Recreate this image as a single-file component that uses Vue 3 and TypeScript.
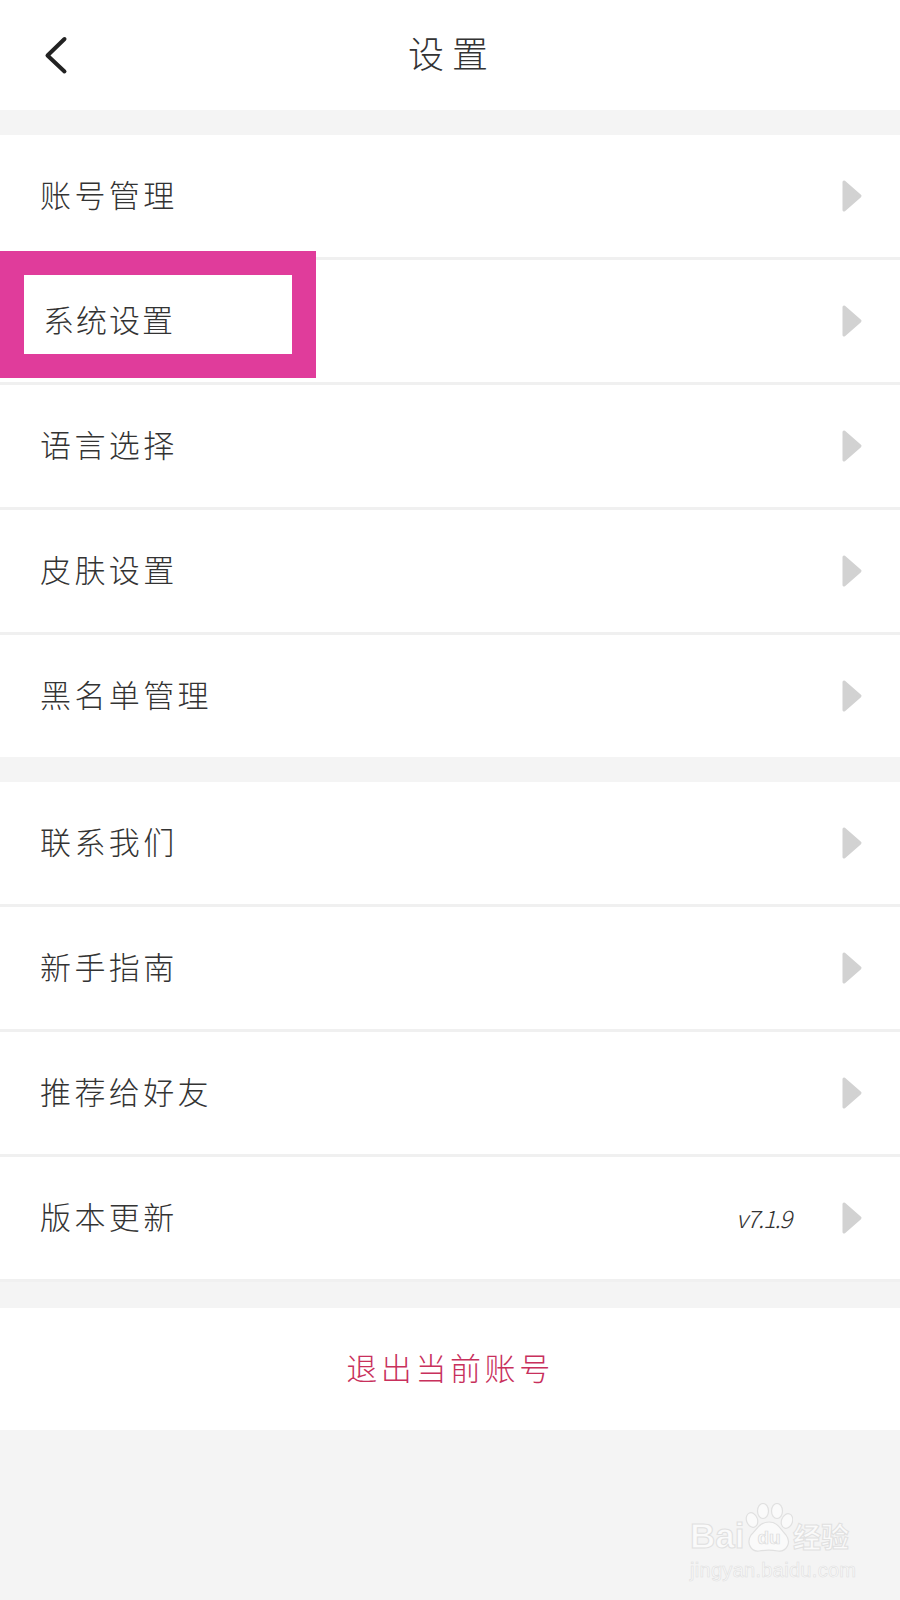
<script setup lang="ts">
interface Row { label: string; value?: string; marked?: boolean }
const groups: Row[][] = [
  [
    { label: '账号管理' },
    { label: '系统设置', marked: true },
    { label: '语言选择' },
    { label: '皮肤设置' },
    { label: '黑名单管理' },
  ],
  [
    { label: '联系我们' },
    { label: '新手指南' },
    { label: '推荐给好友' },
    { label: '版本更新', value: 'v7.1.9' },
  ],
]
</script>

<template>
  <div class="page">
    <header class="header">
      <svg class="back" width="28" height="40" viewBox="0 0 28 40" aria-hidden="true">
        <path d="M22.5 4 L5.5 20.5 L22.5 36.5" fill="none" stroke="#222" stroke-width="4" stroke-linecap="round" stroke-linejoin="round" />
      </svg>
      <h1 class="title">设置</h1>
    </header>

    <section v-for="(group, g) in groups" :key="g" class="group">
      <div v-for="row in group" :key="row.label" class="row" :class="{ marked: row.marked }">
        <span class="label">{{ row.label }}</span>
        <span v-if="row.value" class="value">{{ row.value }}</span>
        <svg class="arrow" width="22" height="34" viewBox="0 0 22 34" aria-hidden="true">
          <path d="M3 3 L19 17 L3 31 Z" fill="#d2d2d2" stroke="#d2d2d2" stroke-width="3" stroke-linejoin="round" />
        </svg>
        <div v-if="row.marked" class="highlight"></div>
      </div>
    </section>

    <div class="logout">退出当前账号</div>

    <div class="watermark">
      <div class="brand">
        <span class="bai">Bai</span>
        <svg class="paw" width="48" height="50" viewBox="0 0 48 50" aria-hidden="true">
          <g fill="#fafafa" stroke="#e0e0e0" stroke-width="1.2">
            <ellipse cx="7" cy="17" rx="5.5" ry="7.5" transform="rotate(-20 7 17)" />
            <ellipse cx="18" cy="8" rx="5.5" ry="7.5" />
            <ellipse cx="32" cy="8" rx="5.5" ry="7.5" />
            <ellipse cx="42" cy="18" rx="5.5" ry="7.5" transform="rotate(20 42 18)" />
            <path d="M24 19 C33 19 35 26 41 32 C47 40 41 49 33 48 C27 47 20 47 14 48 C6 49 1 40 6 32 C12 26 15 19 24 19 Z" />
          </g>
          <text x="24" y="41" text-anchor="middle" class="du">du</text>
        </svg>
        <span class="jy">经验</span>
      </div>
      <div class="url">jingyan.baidu.com</div>
    </div>
  </div>
</template>

<style>
html, body { margin: 0; padding: 0; background: #f4f4f4; }
</style>

<style scoped>
.page {
  position: relative;
  width: 900px;
  height: 1600px;
  overflow: hidden;
  background: #f4f4f4;
  font-family: "Noto Sans CJK SC", "Noto Sans", sans-serif;
  font-weight: 300;
  color: #333;
}
.header {
  position: relative;
  height: 110px;
  background: #fff;
  display: flex;
  align-items: center;
  justify-content: center;
}
.back { position: absolute; left: 42px; top: 35px; }
.title {
  margin: 0 0 6px 4px;
  font-size: 36px;
  font-weight: 300;
  letter-spacing: 8px;
  color: #333;
  line-height: 1;
}
.group { margin-top: 25px; background: #fff; }
.row {
  position: relative;
  height: 122px;
  display: flex;
  align-items: center;
  padding: 0 37px 0 40px;
  border-bottom: 3px solid #f0f0f0;
}
.group:first-of-type .row:last-child { border-bottom: 0; }
.label {
  flex: 1;
  font-size: 31px;
  letter-spacing: 3.4px;
  line-height: 1;
  padding-bottom: 5px;
}
.marked .label { padding-left: 3px; letter-spacing: 2px; }
.value {
  margin-right: 50px;
  font-size: 24px;
  font-style: italic;
  letter-spacing: -1.2px;
  line-height: 1;
}
.arrow { flex: none; }
.highlight {
  position: absolute;
  left: 0;
  top: -9px;
  width: 268px;
  height: 79px;
  border: 24px solid #e03c9b;
  pointer-events: none;
}
.logout {
  margin-top: 26px;
  height: 122px;
  background: #fff;
  display: flex;
  align-items: center;
  justify-content: center;
  font-size: 31px;
  letter-spacing: 3.6px;
  color: #c8305c;
  padding-bottom: 5px;
  box-sizing: border-box;
}
.watermark {
  position: absolute;
  left: 690px;
  top: 1503px;
  width: 170px;
  color: #fafafa;
}
.brand { display: flex; align-items: flex-end; height: 50px; }
.bai, .jy {
  font-family: "Liberation Sans", "Noto Sans CJK SC", sans-serif;
  font-weight: 700;
  -webkit-text-stroke: 1px #e0e0e0;
  line-height: 1;
}
.bai { width: 55px; font-size: 35px; letter-spacing: 0; }
.paw { flex: none; }
.du {
  font-family: "Liberation Sans", sans-serif;
  font-size: 19px;
  font-weight: 700;
  fill: #f8f8f8;
  stroke: #dadada;
  stroke-width: 0.7;
}
.jy { font-size: 28px; white-space: nowrap; }
.url {
  margin-top: 7px;
  font-family: "Liberation Sans", sans-serif;
  font-size: 20px;
  line-height: 1;
  letter-spacing: 0.3px;
  white-space: nowrap;
  -webkit-text-stroke: 0.6px #e0e0e0;
}
</style>
